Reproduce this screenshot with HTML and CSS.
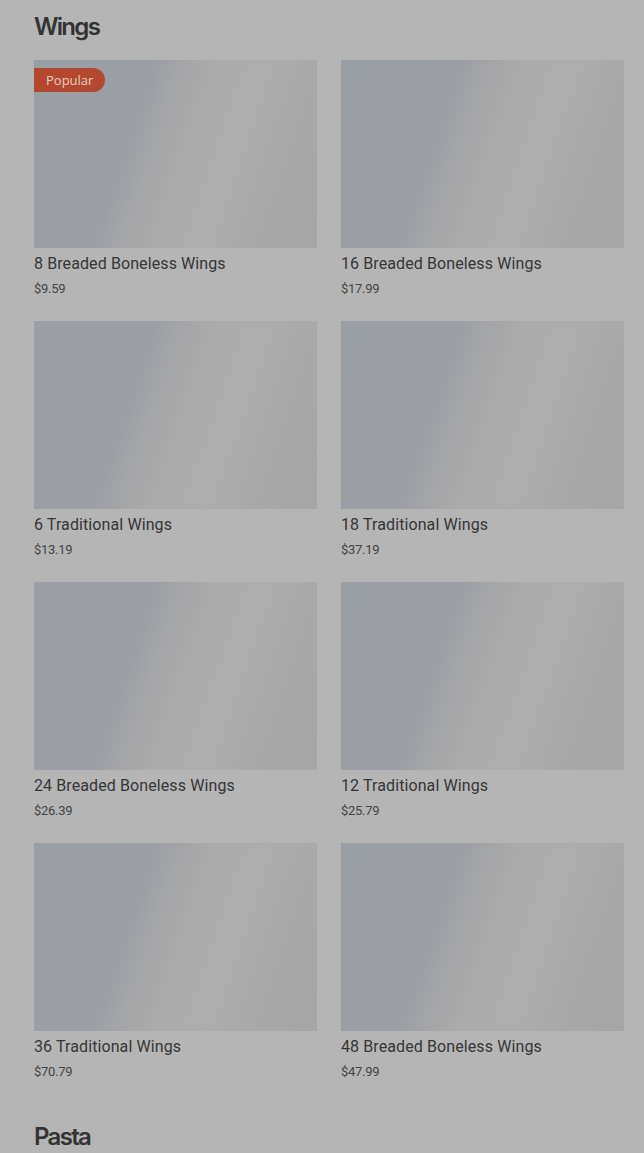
FILE: index.html
```html
<!DOCTYPE html>
<html lang="en">
<head>
<meta charset="utf-8">
<title>Menu</title>
<link rel="stylesheet" href="styles.css">
</head>
<body>
<main class="menu">
  <section class="section">
    <h2 class="section-title">Wings</h2>
    <div class="grid">
      <div class="card">
        <div class="thumb"><span class="badge">Popular</span></div>
        <div class="name">8 Breaded Boneless Wings</div>
        <div class="price">$9.59</div>
      </div>
      <div class="card">
        <div class="thumb"></div>
        <div class="name">16 Breaded Boneless Wings</div>
        <div class="price">$17.99</div>
      </div>
      <div class="card">
        <div class="thumb"></div>
        <div class="name">6 Traditional Wings</div>
        <div class="price">$13.19</div>
      </div>
      <div class="card">
        <div class="thumb"></div>
        <div class="name">18 Traditional Wings</div>
        <div class="price">$37.19</div>
      </div>
      <div class="card">
        <div class="thumb"></div>
        <div class="name">24 Breaded Boneless Wings</div>
        <div class="price">$26.39</div>
      </div>
      <div class="card">
        <div class="thumb"></div>
        <div class="name">12 Traditional Wings</div>
        <div class="price">$25.79</div>
      </div>
      <div class="card">
        <div class="thumb"></div>
        <div class="name">36 Traditional Wings</div>
        <div class="price">$70.79</div>
      </div>
      <div class="card">
        <div class="thumb"></div>
        <div class="name">48 Breaded Boneless Wings</div>
        <div class="price">$47.99</div>
      </div>
    </div>
  </section>
  <section class="section">
    <h2 class="section-title">Pasta</h2>
  </section>
</main>
</body>
</html>
```
FILE: styles.css
```css
html, body {
  margin: 0;
  padding: 0;
  background: #b5b5b5;
}
body {
  font-family: Roboto, "Liberation Sans", Arial, sans-serif;
  color: #353535;
  height: 1153px;
  overflow: hidden;
}
.menu {
  padding: 0 20px 0 34px;
}
.section {
  padding-top: 11px;
}
.section + .section {
  margin-top: 28px;
}
.section-title {
  margin: 0 0 17px 0;
  font-family: Inter, "Liberation Sans", Arial, sans-serif;
  font-size: 24px;
  line-height: 32px;
  font-weight: 600;
  letter-spacing: -1.7px;
  color: #333333;
}
.grid {
  display: grid;
  grid-template-columns: 283px 283px;
  column-gap: 24px;
  row-gap: 22px;
}
.card {
  display: flex;
  flex-direction: column;
}
.thumb {
  position: relative;
  height: 188px;
  background: linear-gradient(109deg, #9a9ea5 0%, #9b9ea5 35%, #a4a5a7 43%, #acacac 53%, #adadad 68%, #a8a8a8 86%, #a6a6a6 100%);
}
.badge {
  position: absolute;
  top: 8px;
  left: 0;
  height: 24px;
  line-height: 24px;
  padding: 0 12px;
  border-radius: 0 12px 12px 0;
  background: #b4482f;
  color: #e6cdc6;
  font-size: 13px;
  font-family: "Open Sans", Roboto, "Liberation Sans", sans-serif;
}
.name {
  margin-top: 4px;
  font-size: 16px;
  line-height: 24px;
  color: #363636;
  letter-spacing: 0.1px;
}
.price {
  margin-top: 3px;
  font-size: 13px;
  line-height: 20px;
  color: #444444;
  letter-spacing: -0.3px;
}
```
